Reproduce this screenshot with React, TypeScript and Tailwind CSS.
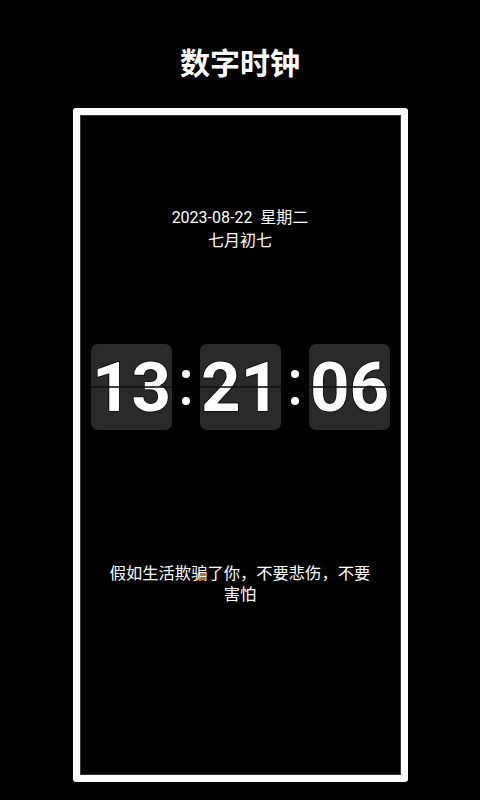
import React from 'react';

const font = { fontFamily: 'Roboto, "Noto Sans CJK SC", sans-serif' };

function FlipCard({ value }: { value: string }) {
  return (
    <div className="relative flex h-[86px] w-[81px] items-center justify-center overflow-hidden rounded-[7px] bg-[#2a2a2a]">
      <span className="text-[69px] font-bold leading-none text-white [-webkit-text-stroke:2px_#111] [paint-order:stroke_fill]">
        {value}
      </span>
      <div className="absolute left-0 right-0 top-[42px] h-[2px] bg-[#111]/80" />
    </div>
  );
}

function Colon() {
  return (
    <div className="flex w-[28px] flex-col items-center gap-[19px]">
      <span className="h-[8px] w-[8px] rounded-full bg-white" />
      <span className="h-[8px] w-[8px] rounded-full bg-white" />
    </div>
  );
}

export default function App() {
  return (
    <div className="flex h-[800px] w-[480px] flex-col items-center bg-black text-white" style={font}>
      <h1 className="pt-[46px] text-[30px] font-bold leading-[36px]">数字时钟</h1>

      <div className="mt-[26px] h-[674px] w-[335px] rounded-[3px] border-[7px] border-white">
        <div className="flex h-full w-full flex-col items-center border border-[#3a3a3a]">
          <div className="mt-[90px] flex flex-col items-center text-[16px] leading-[23px]">
            <span className="whitespace-pre">2023-08-22  星期二</span>
            <span>七月初七</span>
          </div>

          <div className="mt-[92px] flex items-center pl-[1px]">
            <FlipCard value="13" />
            <Colon />
            <FlipCard value="21" />
            <Colon />
            <FlipCard value="06" />
          </div>

          <p className="mt-[133px] w-[266px] text-center text-[16.3px] leading-[21px]">
            假如生活欺骗了你，不要悲伤，不要害怕
          </p>
        </div>
      </div>
    </div>
  );
}
